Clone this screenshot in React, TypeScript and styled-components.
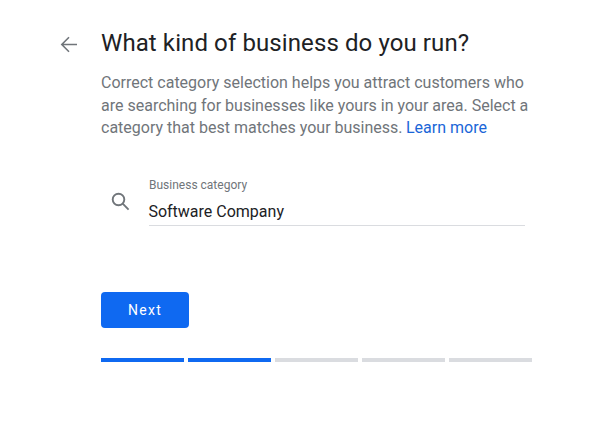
import React from "react";
import styled, { createGlobalStyle } from "styled-components";

const Global = createGlobalStyle`
  html, body { margin: 0; padding: 0; background: #fff; }
  body { font-family: Roboto, "Liberation Sans", sans-serif; }
`;

const Page = styled.main`
  width: 599px;
  height: 435px;
  box-sizing: border-box;
  padding: 27px 67px 0 59px;
  display: grid;
  grid-template-columns: 42px 1fr;
  align-content: start;
`;

const BackButton = styled.div`
  width: 20px;
  height: 20px;
  margin-top: 7px;
  color: #70757a;
`;

const Content = styled.section`
  display: flex;
  flex-direction: column;
`;

const Title = styled.h1`
  margin: 0;
  font-size: 24px;
  line-height: 32px;
  font-weight: 400;
  letter-spacing: 0.1px;
  color: #202124;
  white-space: nowrap;
`;

const Description = styled.p`
  margin: 13px 0 0;
  font-size: 16px;
  line-height: 22.5px;
  color: #70757a;
  white-space: nowrap;
`;

const LearnMore = styled.a`
  color: #1a66d8;
  margin-left: -0.6px;
`;

const FieldRow = styled.div`
  display: flex;
  align-items: flex-start;
  margin: 38.5px 7px 0 9px;
`;

const SearchIcon = styled.div`
  width: 20px;
  height: 20px;
  margin-top: 13px;
  margin-right: 19px;
  color: #70757a;
  flex: none;
`;

const Field = styled.div`
  flex: 1;
  border-bottom: 1px solid #dadce0;
  height: 47px;
  box-sizing: content-box;
`;

const FieldLabel = styled.div`
  font-size: 12px;
  line-height: 14px;
  color: #70757a;
`;

const FieldValue = styled.div`
  font-size: 16px;
  line-height: 22px;
  color: #202124;
  margin: 9px 0 0 -0.6px;
`;

const NextButton = styled.button`
  display: block;
  width: 88px;
  height: 36px;
  margin-top: 66px;
  border: 0;
  border-radius: 4px;
  background: #0f69f1;
  color: #fff;
  font-family: inherit;
  font-size: 14px;
  font-weight: 400;
  letter-spacing: 1.3px;
  padding: 0;
`;

const Progress = styled.div`
  display: flex;
  gap: 4px;
  margin-top: 30px;
`;

const Segment = styled.div<{ $active?: boolean }>`
  width: 83px;
  height: 4px;
  background: ${(p) => (p.$active ? "#0f69f1" : "#dadce0")};
`;

export default function App() {
  return (
    <>
      <Global />
      <Page>
        <BackButton>
          <svg width="20" height="20" viewBox="0 0 20 20" fill="none" stroke="currentColor" strokeWidth="1.6">
            <path d="M18 10.5H3.5M10 3.3L2.8 10.5L10 17.7" />
          </svg>
        </BackButton>
        <Content>
          <Title>What kind of business do you run?</Title>
          <Description>
            Correct category selection helps you attract customers who
            <br />
            are searching for businesses like yours in your area. Select a
            <br />
            category that best matches your business. <LearnMore>Learn more</LearnMore>
          </Description>
          <FieldRow>
            <SearchIcon>
              <svg width="20" height="20" viewBox="0 0 20 20" fill="none" stroke="currentColor" strokeWidth="1.9">
                <circle cx="8.5" cy="8.5" r="5.8" />
                <path d="M12.7 12.7L18.6 18.6" />
              </svg>
            </SearchIcon>
            <Field>
              <FieldLabel>Business category</FieldLabel>
              <FieldValue>Software Company</FieldValue>
            </Field>
          </FieldRow>
          <NextButton>Next</NextButton>
          <Progress>
            <Segment $active />
            <Segment $active />
            <Segment />
            <Segment />
            <Segment />
          </Progress>
        </Content>
      </Page>
    </>
  );
}
